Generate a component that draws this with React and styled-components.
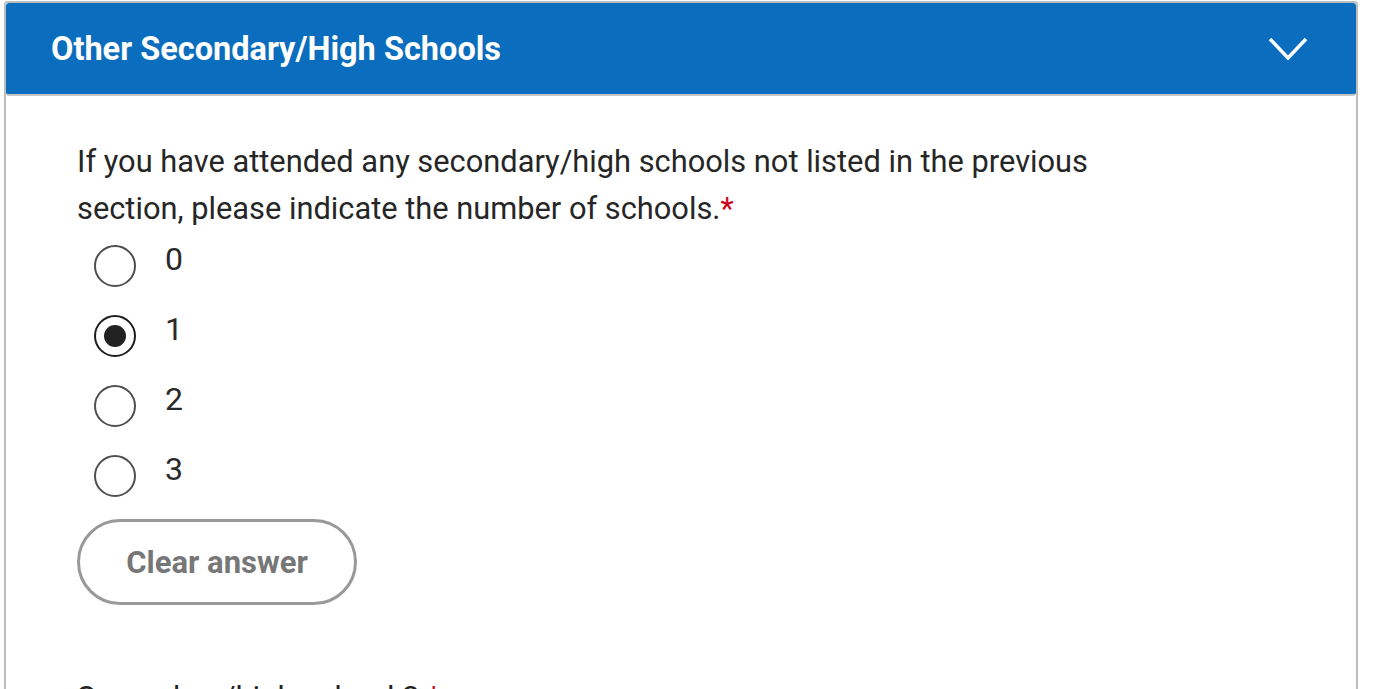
import styled, { createGlobalStyle } from "styled-components";
import { useState } from "react";

const GlobalStyle = createGlobalStyle`
  body {
    margin: 0;
    background: #ffffff;
    font-family: Roboto, "Liberation Sans", sans-serif;
    color: #222222;
  }
`;

const Panel = styled.section`
  margin: 1px 0 0 4px;
  width: 1354px;
  height: 720px;
  box-sizing: border-box;
  border: 2px solid #bdbdbd;
  border-radius: 4px;
  overflow: hidden;
`;
const Header = styled.div`
  height: 91px;
  background: #0b6dbd;
  border-radius: 3px;
  display: flex;
  align-items: center;
  justify-content: space-between;
  padding: 0 48px 0 45px;
  border-bottom: 2px solid #c4c4c4;
`;
const Title = styled.h2`
  margin: 0;
  color: #ffffff;
  font-size: 32.5px;
  font-weight: 700;
`;
const Body = styled.div`
  padding: 42px 0 0 71px;
`;
const Question = styled.p`
  margin: 0;
  width: 1060px;
  font-size: 30.8px;
  line-height: 47px;
  color: #262626;
`;
const Required = styled.span`
  color: #d0021b;
`;
const Options = styled.div`
  display: flex;
  flex-direction: column;
  margin-top: 4px;
`;
const Option = styled.label`
  height: 70px;
  display: flex;
  align-items: flex-start;
  cursor: pointer;
`;
const Circle = styled.span`
  width: 42px;
  height: 42px;
  margin: 9px 29px 0 17px;
  box-sizing: border-box;
  border-radius: 50%;
  border: ${(p) => (p.$checked ? "2.5px solid #1d1d1d" : "2px solid #4f4f4f")};
  display: flex;
  align-items: center;
  justify-content: center;
  &::after {
    content: "";
    width: 22px;
    height: 22px;
    border-radius: 50%;
    background: #222222;
    display: ${(p) => (p.$checked ? "block" : "none")};
  }
`;
const OptionText = styled.span`
  margin-top: 5px;
  font-size: 32px;
  line-height: 36px;
  color: #2a2a2a;
`;
const ClearButton = styled.button`
  margin-top: 3px;
  width: 280px;
  height: 86px;
  border: 3px solid #999999;
  border-radius: 43px;
  background: #ffffff;
  color: #777777;
  font-family: Roboto, "Liberation Sans", sans-serif;
  font-size: 31px;
  font-weight: 700;
  cursor: pointer;
`;
const NextQuestion = styled.p`
  margin: 75px 0 0;
  font-size: 31px;
  line-height: 36px;
  color: #222222;
`;

const choices = ["0", "1", "2", "3"];

function Chevron() {
  return (
    <svg width="40" height="26" viewBox="0 0 40 26">
      <polyline points="2,3 20,22 38,3" fill="none" stroke="#ffffff" strokeWidth="3.5" />
    </svg>
  );
}

export default function App() {
  const [selected, setSelected] = useState("1");

  return (
    <>
      <GlobalStyle />
      <Panel>
        <Header>
          <Title>Other Secondary/High Schools</Title>
          <Chevron />
        </Header>
        <Body>
          <Question>
            If you have attended any secondary/high schools not listed in the previous section, please indicate the
            number of schools.<Required>*</Required>
          </Question>
          <Options>
            {choices.map((c) => (
              <Option key={c} onClick={() => setSelected(c)}>
                <Circle $checked={selected === c} />
                <OptionText>{c}</OptionText>
              </Option>
            ))}
          </Options>
          <ClearButton onClick={() => setSelected(null)}>Clear answer</ClearButton>
          <NextQuestion>
            Secondary/high school 2:<Required>*</Required>
          </NextQuestion>
        </Body>
      </Panel>
    </>
  );
}
